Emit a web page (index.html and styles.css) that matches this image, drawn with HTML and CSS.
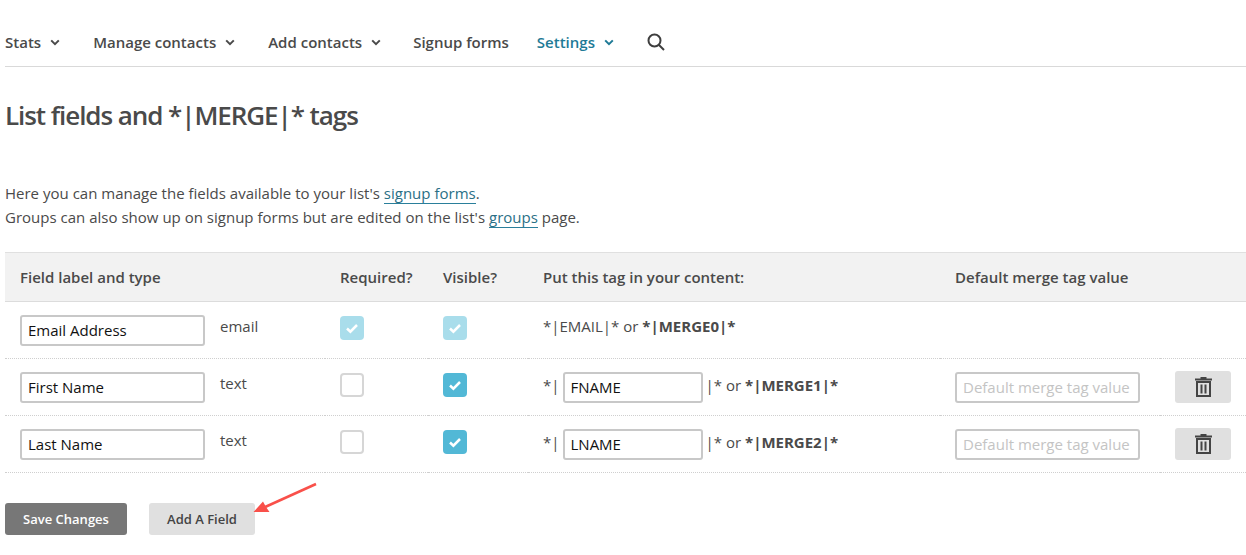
FILE: index.html
```html
<!DOCTYPE html>
<html lang="en">
<head>
<meta charset="utf-8">
<title>List fields and MERGE tags</title>
<link rel="stylesheet" href="styles.css">
</head>
<body>
<nav class="nav">
  <a class="nav-item">Stats <svg class="chev" viewBox="0 0 10 7"><path d="M1.2 1.4 5 5.2 8.8 1.4"/></svg></a>
  <a class="nav-item">Manage contacts <svg class="chev" viewBox="0 0 10 7"><path d="M1.2 1.4 5 5.2 8.8 1.4"/></svg></a>
  <a class="nav-item tight">Add contacts <svg class="chev" viewBox="0 0 10 7"><path d="M1.2 1.4 5 5.2 8.8 1.4"/></svg></a>
  <a class="nav-item">Signup forms</a>
  <a class="nav-item active">Settings <svg class="chev" viewBox="0 0 10 7"><path d="M1.2 1.4 5 5.2 8.8 1.4"/></svg></a>
  <svg class="search" viewBox="0 0 18 18"><circle cx="7.5" cy="7.5" r="6"/><path d="M12 12l5 5"/></svg>
</nav>
<h1 class="title">List fields and *|MERGE|* tags</h1>
<p class="intro">Here you can manage the fields available to your list's <a class="link">signup forms</a>.<br>Groups can also show up on signup forms but are edited on the list's <a class="link">groups</a> page.</p>
<table class="fields">
  <colgroup><col class="c1"><col class="c2"><col class="c3"><col class="c4"><col class="c5"><col class="c6"></colgroup>
  <thead>
    <tr><th>Field label and type</th><th>Required?</th><th>Visible?</th><th>Put this tag in your content:</th><th>Default merge tag value</th><th></th></tr>
  </thead>
  <tbody>
    <tr>
      <td><div class="label-cell"><input class="input name" value="Email Address"><span class="type">email</span></div></td>
      <td><span class="check on faded"><svg viewBox="0 0 24 24"><path d="M7 12.5l3.4 3.2L17 9"/></svg></span></td>
      <td><span class="check on faded"><svg viewBox="0 0 24 24"><path d="M7 12.5l3.4 3.2L17 9"/></svg></span></td>
      <td><span class="tag solo">*|EMAIL|* or <b>*|MERGE0|*</b></span></td>
      <td></td><td></td>
    </tr>
    <tr>
      <td><div class="label-cell"><input class="input name" value="First Name"><span class="type">text</span></div></td>
      <td><span class="check"></span></td>
      <td><span class="check on"><svg viewBox="0 0 24 24"><path d="M7 12.5l3.4 3.2L17 9"/></svg></span></td>
      <td><div class="tag-cell"><span class="tag">*|</span><input class="input tagname" value="FNAME"><span class="tag">|* or <b>*|MERGE1|*</b></span></div></td>
      <td><input class="input dflt" placeholder="Default merge tag value"></td>
      <td><button class="trash"><svg viewBox="0 0 17 20"><path class="fill" d="M5.500 0h6v1.500H17v2H0v-2h5.500z"/><path class="stroke" d="M2 5h13v14H2z"/><path class="fill" d="M5.500 7.500h2V16.500h-2zM9.500 7.500h2V16.500h-2z"/></svg></button></td>
    </tr>
    <tr>
      <td><div class="label-cell"><input class="input name" value="Last Name"><span class="type">text</span></div></td>
      <td><span class="check"></span></td>
      <td><span class="check on"><svg viewBox="0 0 24 24"><path d="M7 12.5l3.4 3.2L17 9"/></svg></span></td>
      <td><div class="tag-cell"><span class="tag">*|</span><input class="input tagname" value="LNAME"><span class="tag">|* or <b>*|MERGE2|*</b></span></div></td>
      <td><input class="input dflt" placeholder="Default merge tag value"></td>
      <td><button class="trash"><svg viewBox="0 0 17 20"><path class="fill" d="M5.500 0h6v1.500H17v2H0v-2h5.500z"/><path class="stroke" d="M2 5h13v14H2z"/><path class="fill" d="M5.500 7.500h2V16.500h-2zM9.500 7.500h2V16.500h-2z"/></svg></button></td>
    </tr>
  </tbody>
</table>
<div class="actions">
  <button class="btn primary">Save Changes</button>
  <button class="btn secondary">Add A Field</button>
  <svg class="arrow" viewBox="0 0 70 36"><path class="shaft" d="M64 2 12 25.500"/><path class="head" d="M1.500 30 11 19.500 14 25 17.500 30z"/></svg>
</div>
</body>
</html>
```
FILE: styles.css
```css
* { box-sizing: border-box; }
html, body { margin: 0; padding: 0; }
body {
  padding-left: 5px;
  font-family: "Open Sans", sans-serif;
  font-size: 15px;
  color: #4a4a4a;
  background: #fff;
  overflow: hidden;
}
.nav {
  display: flex;
  align-items: center;
  height: 67px;
  padding-top: 18px;
  border-bottom: 1px solid #d9d9d9;
  font-weight: 600;
  white-space: nowrap;
}
.nav-item { display: flex; align-items: center; margin-right: 28px; }
.nav-item.tight { margin-right: 27px; }
.chev { width: 10px; height: 7px; margin-left: 9px; margin-right: 5px; fill: none; stroke: currentColor; stroke-width: 2; }
.active { color: #1e7a96; }
.search { width: 18px; height: 18px; margin-left: 0; fill: none; stroke: #3e3e3e; stroke-width: 2; }
.title {
  margin: 32px 0 0;
  font-size: 26px;
  line-height: 32px;
  font-weight: 600;
  letter-spacing: -1.07px;
}
.intro { margin: 50px 0 23px; line-height: 24px; word-spacing: 0.05px; }
.link { color: #2a6f86; border-bottom: 1px solid #2a7f9b; }
.fields {
  width: 1241px;
  border-collapse: collapse;
  table-layout: fixed;
}
.c1 { width: 320px; } .c2 { width: 103px; } .c3 { width: 100px; } .c4 { width: 412px; } .c5 { width: 220px; } .c6 { width: 86px; }
th {
  height: 49px;
  padding: 0 0 0 15px;
  background: #f2f2f2;
  border-top: 1px solid #e0e0e0;
  border-bottom: 1px solid #dcdcdc;
  text-align: left;
  font-weight: 600;
  font-size: 15px;
}
td {
  height: 57px;
  padding: 0 0 0 15px;
  border-bottom: 1px dotted #cfcfcf;
  vertical-align: middle;
}
.label-cell { display: flex; align-items: flex-start; }
.input {
  height: 31px;
  padding: 0 6px;
  border: 2px solid #c8c8c8;
  border-radius: 3px;
  font-family: inherit;
  font-size: 15px;
  color: #111;
  background: #fff;
  outline: none;
}
.input::placeholder { color: #c4c4c4; opacity: 1; }
.name { width: 185px; }
.type { margin-left: 15px; line-height: 24px; margin-top: -1px; }
.check {
  display: block;
  width: 24px;
  height: 24px;
  border: 2px solid #d6d6d6;
  border-radius: 4px;
  margin-top: -5px;
}
.check.on { border: 0; background: #52b8d6; }
.check.faded { background: #a9ddeb; }
.check svg { display: block; width: 24px; height: 24px; fill: none; stroke: #fff; stroke-width: 2.500; }
.tag { line-height: 24px; position: relative; top: -2px; }
.tag.solo { top: -4px; }
b { font-weight: 700; }
.tag-cell { display: flex; align-items: center; }
.tagname { width: 140px; margin: 0 3px; }
.dflt { width: 185px; }
.trash {
  display: flex;
  align-items: center;
  justify-content: center;
  width: 56px;
  height: 32px;
  border: 0;
  border-radius: 3px;
  background: #e0e0e0;
  padding: 0;
}
.trash svg { width: 17px; height: 20px; }
.trash .fill { fill: #444; }
.trash .stroke { fill: none; stroke: #444; stroke-width: 2; }
.actions { position: relative; display: flex; gap: 22px; margin-top: 30px; }
.btn {
  height: 32px;
  border: 0;
  border-radius: 3px;
  font-family: inherit;
  font-size: 13px;
  font-weight: 600;
  padding: 0;
}
.primary { width: 122px; background: #777; color: #fff; }
.secondary { width: 106px; background: #e0e0e0; color: #444; }
.arrow { position: absolute; left: 247px; top: -21px; width: 70px; height: 36px; }
.shaft { fill: none; stroke: #f9504a; stroke-width: 2.500; }
.head { fill: #f9504a; }
```
